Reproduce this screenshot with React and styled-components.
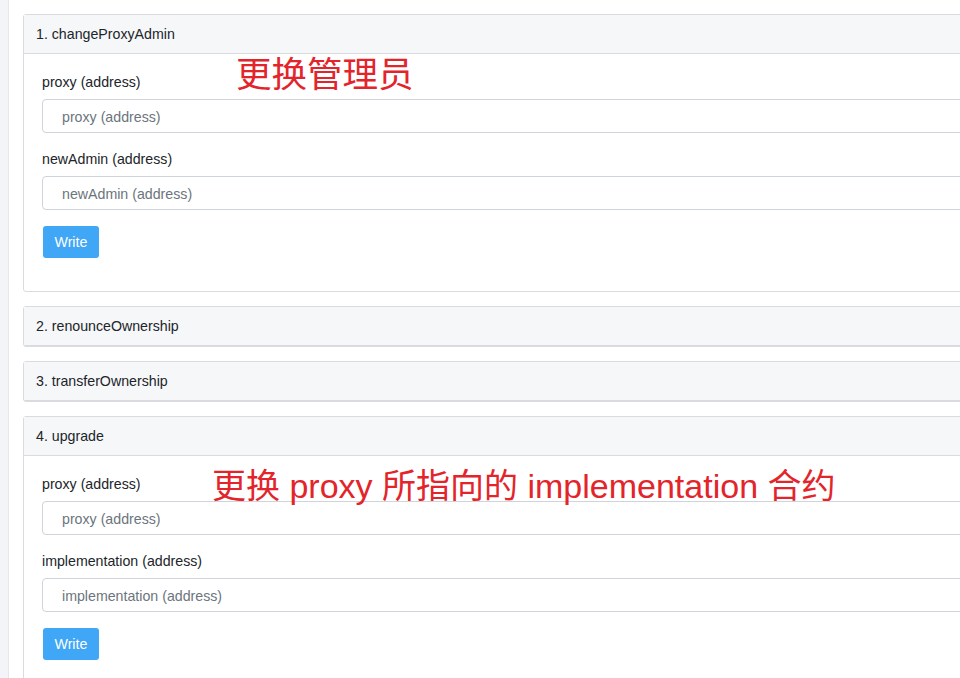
import React from "react";
import styled, { createGlobalStyle } from "styled-components";

const Global = createGlobalStyle`
  html, body { margin: 0; padding: 0; background: #fff; }
  body { font-family: "Liberation Sans", Arial, sans-serif; color: #212529; }
  * { box-sizing: border-box; }
`;

const Page = styled.div`
  display: flex;
  width: 960px;
  height: 678px;
  overflow: hidden;
  position: relative;
`;

const Sidebar = styled.div`
  flex: 0 0 9px;
  background: #f3f4f8;
  border-right: 1px solid #e4e6eb;
`;

const Main = styled.main`
  flex: 1;
  padding: 14px 0 0 14px;
  overflow: hidden;
`;

const Card = styled.section`
  width: 1000px;
  border: 1px solid #d9dbde;
  border-radius: 3px;
  margin-bottom: 14px;
  background: #fff;
`;

const CardHeader = styled.div`
  height: 39px;
  display: flex;
  align-items: center;
  padding: 0 12px;
  background: #f6f7f9;
  border-bottom: 1px solid #d9dbde;
  font-size: 14.2px;
  color: #212529;
`;

const CardBody = styled.div`
  padding: 18px 18px 33px;
`;

const Group = styled.div`
  margin-bottom: 16px;
`;

const Label = styled.label`
  display: block;
  font-size: 14.2px;
  line-height: 21px;
  margin-bottom: 6px;
  color: #212529;
`;

const Input = styled.input`
  display: block;
  width: 100%;
  height: 34px;
  border: 1px solid #ced4da;
  border-radius: 4px;
  padding: 2px 19px 0;
  font-family: "Liberation Sans", Arial, sans-serif;
  font-size: 14.2px;
  color: #495057;
  outline: none;
  &::placeholder { color: #6c757d; }
`;

const Button = styled.button`
  height: 32px;
  padding: 0 11.5px;
  margin-left: 1px;
  border: none;
  border-radius: 3px;
  background: #40a6f6;
  color: #fff;
  font-family: "Liberation Sans", Arial, sans-serif;
  font-size: 14.2px;
  cursor: pointer;
`;

const Note = styled.div`
  position: absolute;
  left: ${(p) => p.$x}px;
  top: ${(p) => p.$y}px;
  font-family: "Liberation Sans", "Noto Sans CJK SC", sans-serif;
  font-size: ${(p) => p.$size}px;
  line-height: 40px;
  color: #e3242b;
  white-space: nowrap;
`;

const functions = [
  { name: "changeProxyAdmin", inputs: ["proxy", "newAdmin"] },
  { name: "renounceOwnership" },
  { name: "transferOwnership" },
  { name: "upgrade", inputs: ["proxy", "implementation"] },
];

export default function App() {
  return (
    <>
      <Global />
      <Page>
        <Sidebar />
        <Main>
          {functions.map((f, i) => (
            <Card key={f.name}>
              <CardHeader>{`${i + 1}. ${f.name}`}</CardHeader>
              {f.inputs && (
                <CardBody>
                  {f.inputs.map((inp) => (
                    <Group key={inp}>
                      <Label>{`${inp} (address)`}</Label>
                      <Input placeholder={`${inp} (address)`} />
                    </Group>
                  ))}
                  <Button>Write</Button>
                </CardBody>
              )}
            </Card>
          ))}
        </Main>
        <Note $x={236} $y={55} $size={35.5}>更换管理员</Note>
        <Note $x={212} $y={466} $size={34}>更换 proxy 所指向的 implementation 合约</Note>
      </Page>
    </>
  );
}
